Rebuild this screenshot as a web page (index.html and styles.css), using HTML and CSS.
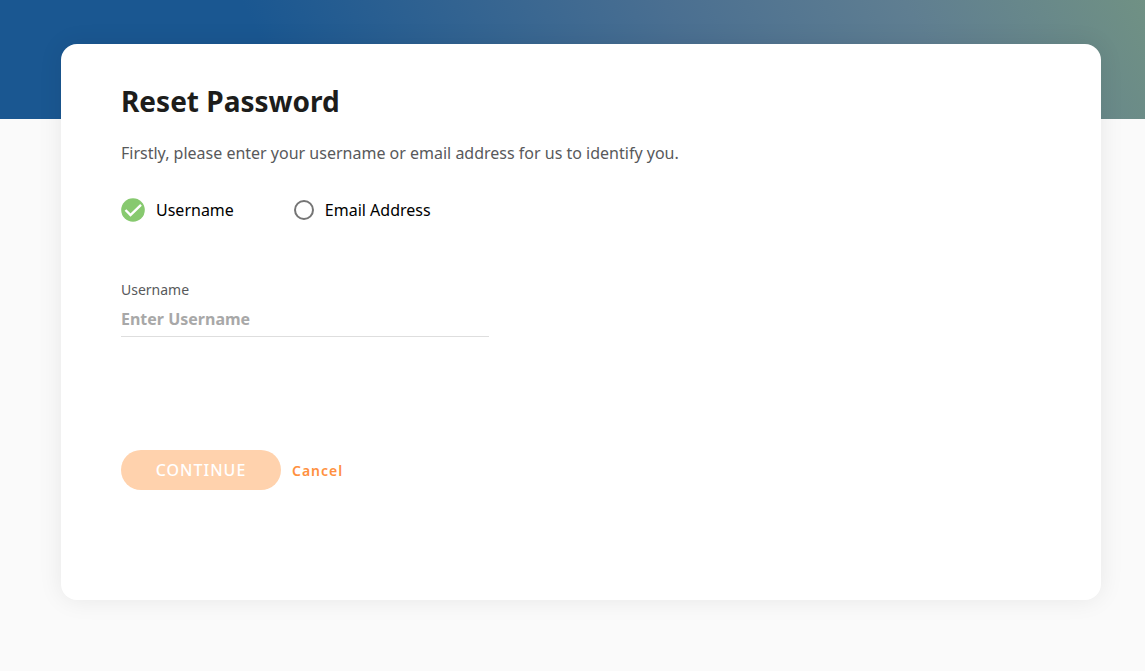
FILE: index.html
```html
<!DOCTYPE html>
<html lang="en">
<head>
<meta charset="utf-8">
<title>Reset Password</title>
<link rel="stylesheet" href="styles.css">
</head>
<body>
<main class="page">
  <form class="card">
    <h1 class="title">Reset Password</h1>
    <p class="intro">Firstly, please enter your username or email address for us to identify you.</p>
    <div class="options">
      <label class="option">
        <input class="radio" type="radio" name="method" checked>
        <svg class="mark mark-on" viewBox="0 0 24 24" aria-hidden="true"><circle cx="12" cy="12" r="11.8" fill="#87c96f"/><path d="M4.5 12L9.5 17L20 6.8" fill="none" stroke="#fff" stroke-width="2.4"/></svg>
        <svg class="mark mark-off" viewBox="0 0 20 20" aria-hidden="true"><circle cx="10" cy="10" r="9" fill="none" stroke="#757575" stroke-width="2"/></svg>
        <span>Username</span>
      </label>
      <label class="option">
        <input class="radio" type="radio" name="method">
        <svg class="mark mark-on" viewBox="0 0 24 24" aria-hidden="true"><circle cx="12" cy="12" r="11.8" fill="#87c96f"/><path d="M4.5 12L9.5 17L20 6.8" fill="none" stroke="#fff" stroke-width="2.4"/></svg>
        <svg class="mark mark-off" viewBox="0 0 20 20" aria-hidden="true"><circle cx="10" cy="10" r="9" fill="none" stroke="#757575" stroke-width="2"/></svg>
        <span>Email Address</span>
      </label>
    </div>
    <div class="field">
      <label class="field-label" for="username">Username</label>
      <input class="field-input" id="username" type="text" placeholder="Enter Username">
    </div>
    <div class="actions">
      <button class="continue" type="submit" disabled>CONTINUE</button>
      <button class="cancel" type="button">Cancel</button>
    </div>
  </form>
</main>
</body>
</html>
```

FILE: styles.css
```css
* { box-sizing: border-box; }
body {
  margin: 0;
  background: #fafafa;
  font-family: "Noto Sans", "Open Sans", sans-serif;
  color: #000;
}
.page {
  padding: 44px 44px 71px 61px;
  background: linear-gradient(63deg, #1a5791 0%, #1a5791 25%, #4a6f91 60%, #5f7e91 80%, #709184 100%) top / 100% 119px no-repeat;
}
.card {
  padding: 36px 60px 110px;
  background: #fff;
  border-radius: 16px;
  box-shadow: 0 0 24px rgba(0, 0, 0, 0.08);
}
.title {
  margin: 0;
  font-size: 28px;
  line-height: 42px;
  color: #1d1d1b;
}
.intro {
  margin: 19px 0 0;
  font-size: 16px;
  line-height: 24px;
  color: #58595b;
}
.options {
  display: flex;
  gap: 60px;
  margin-top: 33px;
}
.option {
  display: flex;
  align-items: center;
  gap: 11px;
  height: 24px;
  font-size: 16px;
}
.radio {
  position: absolute;
  opacity: 0;
}
.mark-on { display: none; width: 24px; height: 24px; }
.mark-off { width: 20px; height: 20px; }
.radio:checked ~ .mark-on { display: block; }
.radio:checked ~ .mark-off { display: none; }
.field {
  display: flex;
  flex-direction: column;
  width: 40%;
  margin-top: 58px;
}
.field-label {
  font-size: 14px;
  line-height: 20px;
  color: #58595b;
}
.field-input {
  height: 37px;
  padding: 2px 0 0;
  border: 0;
  border-bottom: 1px solid #dedede;
  background: transparent;
  font: 700 16px/24px "Noto Sans", "Open Sans", sans-serif;
  outline: none;
}
.field-input::placeholder { color: #a8a8a8; opacity: 1; }
.actions {
  display: flex;
  align-items: center;
  gap: 11px;
  margin-top: 113px;
}
.continue {
  width: 160px;
  height: 40px;
  border: 0;
  border-radius: 20px;
  background: #ffd2ad;
  color: #fff;
  font: 500 16px/24px "Noto Sans", "Open Sans", sans-serif;
  letter-spacing: 1px;
}
.cancel {
  padding: 2px 0 0;
  border: 0;
  background: none;
  color: #ff9040;
  font: 600 14px/20px "Noto Sans", "Open Sans", sans-serif;
  letter-spacing: 1px;
}
```
